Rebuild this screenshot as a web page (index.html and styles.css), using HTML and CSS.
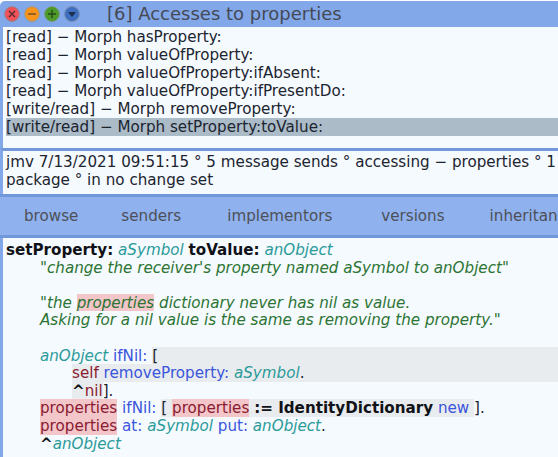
FILE: index.html
```html
<!DOCTYPE html>
<html lang="en">
<head>
  <meta charset="UTF-8" />
  <title>Accesses to properties</title>
  <link rel="stylesheet" href="styles.css">
</head>
<body>
<div class="ventana">
  <!-- barra de titulo -->
  <div class="titulo">
    <div class="botones">
      <svg class="btn" viewBox="0 0 16 16"><circle cx="8" cy="8" r="7.4" fill="#f0525a" stroke="#8a8a9a"/><path d="M5 5l6 6M11 5l-6 6" stroke="#5a2a30" stroke-width="1.4"/></svg>
      <svg class="btn" viewBox="0 0 16 16"><circle cx="8" cy="8" r="7.4" fill="#f7941d" stroke="#9a9a8a"/><path d="M4 8h8" stroke="#7a5020" stroke-width="1.4"/></svg>
      <svg class="btn" viewBox="0 0 16 16"><circle cx="8" cy="8" r="7.4" fill="#4c9a2a" stroke="#7a9a80"/><path d="M4 8h8M8 4v8" stroke="#24481a" stroke-width="1.4"/></svg>
      <svg class="btn" viewBox="0 0 16 16"><circle cx="8" cy="8" r="7.4" fill="#3f6fc0" stroke="#7a8ab0"/><path d="M4 6h8l-4 5z" fill="#1e3050"/></svg>
    </div>
    <span class="titulo-texto">[6] Accesses to properties</span>
  </div>

  <!-- lista -->
  <div class="panel lista">
    <div>[read] − Morph hasProperty:</div>
    <div>[read] − Morph valueOfProperty:</div>
    <div>[read] − Morph valueOfProperty:ifAbsent:</div>
    <div>[read] − Morph valueOfProperty:ifPresentDo:</div>
    <div>[write/read] − Morph removeProperty:</div>
    <div class="sel">[write/read] − Morph setProperty:toValue:</div>
  </div>

  <!-- info -->
  <div class="panel info">jmv 7/13/2021 09:51:15 ° 5 message sends ° accessing − properties ° 1<br>package ° in no change set</div>

  <!-- botones -->
  <div class="barra">
    <span>browse</span>
    <span>senders</span>
    <span>implementors</span>
    <span>versions</span>
    <span>inheritance</span>
  </div>

  <!-- codigo -->
  <div class="panel codigo">
    <div class="ln"><b>setProperty:</b> <i class="arg">aSymbol</i> <b>toValue:</b> <i class="arg">anObject</i></div>
    <div class="ln t1 com">"change the receiver's property named aSymbol to anObject"</div>
    <div class="ln"></div>
    <div class="ln t1 com">"the <span class="rosa">properties</span> dictionary never has nil as value.</div>
    <div class="ln t1 com">Asking for a nil value is the same as removing the property."</div>
    <div class="ln"></div>
    <div class="ln t1"><i class="arg">anObject</i> <span class="msg">ifNil:</span> <span class="gris llena">[</span></div>
    <div class="ln t2"><span class="gris llena"><span class="res">self</span> <span class="msg">removeProperty:</span> <i class="arg">aSymbol</i>.</span></div>
    <div class="ln t2"><span class="gris"><b>^</b><span class="res">nil</span></span>].</div>
    <div class="ln t1"><span class="rosa res">properties</span> <span class="msg">ifNil:</span> <span class="gris">[ <span class="rosa res">properties</span> <b>:= IdentityDictionary</b> <span class="msg">new</span> </span>].</div>
    <div class="ln t1"><span class="rosa res">properties</span> <span class="msg">at:</span> <i class="arg">aSymbol</i> <span class="msg">put:</span> <i class="arg">anObject</i>.</div>
    <div class="ln t1"><b>^</b><i class="arg">anObject</i></div>
  </div>
</div>
</body>
</html>
```

FILE: styles.css
```css
html,body{margin:0;padding:0;background:#fff;}
body{font-family:"DejaVu Sans",sans-serif;font-size:15.15px;line-height:18px;color:#1c2430;overflow:hidden;}

.ventana{
  width:558px;height:456px;margin-top:1px;background:#82a8ea;border-top-left-radius:5px;
  display:flex;flex-direction:column;overflow:hidden;
}

/* ---------- Titulo ---------- */
.titulo{height:26px;flex:none;display:flex;align-items:center;padding-left:4px;}
.botones{display:flex;gap:4px;width:103px;flex:none;}
.btn{width:16px;height:16px;display:block;}
.titulo-texto{font-size:18px;color:#454a55;white-space:nowrap;}

/* ---------- Paneles ---------- */
.panel{background:#f5fafe;margin-left:3px;padding-left:3px;}
.lista{height:121px;flex:none;box-sizing:border-box;padding-top:1px;}
.sel{background:#abbbc7;}
.info{
  height:46px;flex:none;box-sizing:border-box;padding-top:2px;margin-left:0;
  border-top:3px solid #7098da;border-left:3px solid #82a8ea;
}
.barra{
  height:44px;flex:none;background:#8fb1ee;
  border-top:3px solid #7098da;border-bottom:3px solid #7098da;box-sizing:border-box;
  display:flex;align-items:center;gap:45px;padding-left:24px;color:#4d5058;white-space:nowrap;
}
.barra span:nth-child(2){margin-left:-2px;}
.barra span:nth-child(3){margin-left:1px;}
.barra span:nth-child(4){margin-left:4px;}
.codigo{flex:1;overflow:hidden;padding-top:3px;}

/* ---------- Codigo ---------- */
.ln{white-space:pre;height:17.6px;line-height:18px;overflow:hidden;}
.t1{padding-left:34px;}
.t2{padding-left:66px;}
.com{color:#2c7434;font-style:italic;}
.arg{color:#2b9a9a;font-style:italic;}
.msg{color:#3a55dc;}
.res{color:#8a1a30;}
.rosa{background:#f3c6ca;}
.gris{background:#e9ecee;}
.llena{padding-right:600px;}
b{color:#101218;}
```
